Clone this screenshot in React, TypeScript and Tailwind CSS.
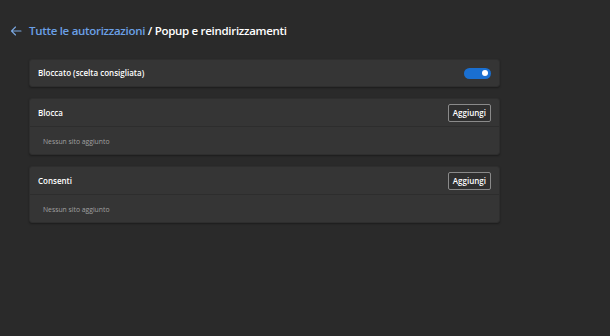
/**
 * Site permissions - Popup e reindirizzamenti (dark settings page).
 */
const SECTIONS = ["Blocca", "Consenti"];

function BackArrow() {
  return (
    <svg viewBox="0 0 12 10" className="h-[10px] w-[12px]" fill="none">
      <path
        d="M11 5 L1.5 5 M5.5 1 L1.5 5 L5.5 9"
        stroke="#7aa7e0"
        strokeWidth={1.1}
        strokeLinecap="round"
        strokeLinejoin="round"
      />
    </svg>
  );
}

function SiteListCard({ title }: { title: string }) {
  return (
    <section className="rounded-[3px] border border-[#2e2e2e] bg-[#353535] shadow-[0_1px_2px_rgba(0,0,0,0.35)]">
      <div className="flex h-[27px] items-center justify-between pl-[8px] pr-[8px]">
        <h3 className="text-[8px] font-semibold text-white">{title}</h3>
        <button className="h-[18px] rounded-[2px] border border-[#8a8a8a] bg-[#2f2f2f] px-[4px] text-[8px] font-semibold text-white">
          Aggiungi
        </button>
      </div>
      <div className="h-px bg-[#2d2d2d]" />
      <p className="flex h-[27px] items-center pl-[13px] pt-[3px] text-[6.8px] text-[#a0a0a0]">
        Nessun sito aggiunto
      </p>
    </section>
  );
}

export default function App() {
  return (
    <div
      className="h-[336px] w-[610px] overflow-hidden bg-[#2a2a2a] pt-[22px]"
      style={{ fontFamily: '"Open Sans", "Noto Sans", sans-serif' }}
    >
      <header className="flex h-[18px] items-center pl-[10px]">
        <BackArrow />
        <h1 className="ml-[7px] text-[11.5px] font-semibold tracking-[-0.3px]">
          <span className="text-[#6ba0e6]">Tutte le autorizzazioni</span>
          <span className="text-white"> / Popup e reindirizzamenti</span>
        </h1>
      </header>

      <div className="ml-[29px] mt-[19px] flex w-[471px] flex-col gap-[11px]">
        <div className="flex h-[28px] items-center justify-between rounded-[3px] border border-[#2e2e2e] bg-[#353535] pl-[8px] pr-[8px] shadow-[0_1px_2px_rgba(0,0,0,0.35)]">
          <span className="text-[8px] font-semibold text-white">
            Bloccato (scelta consigliata)
          </span>
          <div className="flex h-[11px] w-[27px] items-center justify-end rounded-full bg-[#1a6fd0] pr-[3px]">
            <div className="h-[6px] w-[6px] rounded-full bg-white" />
          </div>
        </div>

        {SECTIONS.map((s) => (
          <SiteListCard key={s} title={s} />
        ))}
      </div>
    </div>
  );
}
